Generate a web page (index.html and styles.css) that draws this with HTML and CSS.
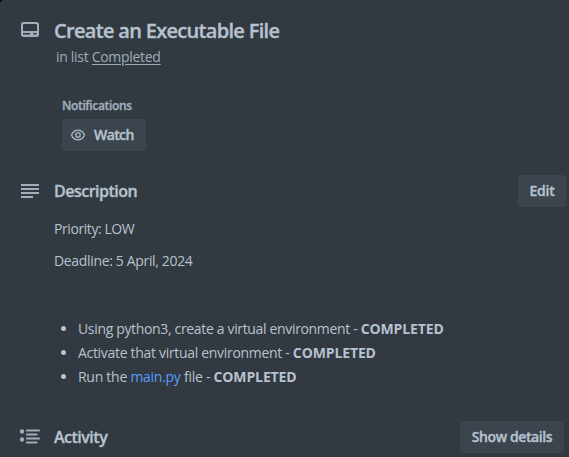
FILE: index.html
```html
<!DOCTYPE html>
<html lang="en">
<head>
<meta charset="utf-8">
<title>Create an Executable File</title>
<link rel="stylesheet" href="styles.css">
</head>
<body>
<main class="card">
  <header class="row header">
    <svg class="icon" viewBox="0 0 24 24"><path fill="currentColor" fill-rule="evenodd" d="M5.500 4h13A2.500 2.500 0 0 1 21 6.500V16.500a2.500 2.500 0 0 1-2.500 2.500h-13A2.500 2.500 0 0 1 3 16.500V6.500A2.500 2.500 0 0 1 5.500 4zM5 7v6h14V7a1 1 0 0 0-1-1H6a1 1 0 0 0-1 1zm0 8V16.400h7v-1.400zm10.500 0V16.400h3v-1.400z"/></svg>
    <div>
      <h1 class="title">Create an Executable File</h1>
      <p class="list-line">in list <a class="list-link">Completed</a></p>
    </div>
  </header>
  <section class="notifications">
    <h2 class="label">Notifications</h2>
    <button class="button watch"><svg class="eye" viewBox="0 0 16 16" fill="none" stroke="currentColor" stroke-width="1.5"><path d="M1.500 8C2.800 4.900 5.100 3.200 8 3.200S13.200 4.900 14.500 8C13.200 11.100 10.900 12.800 8 12.800S2.800 11.100 1.500 8z"/><circle cx="8" cy="8" r="2.200"/></svg><span>Watch</span></button>
  </section>
  <section class="row description-head">
    <svg class="icon" viewBox="0 0 24 24" fill="none" stroke="currentColor" stroke-width="2"><path d="M3 6h18M3 10h18M3 14h18M3 18h12"/></svg>
    <h2 class="heading">Description</h2>
    <button class="button edit">Edit</button>
  </section>
  <section class="content">
    <p class="priority">Priority: LOW</p>
    <p>Deadline: 5 April, 2024</p>
    <ul class="tasks">
      <li>Using python3, create a virtual environment - <strong>COMPLETED</strong></li>
      <li class="activate">Activate that virtual environment - <strong>COMPLETED</strong></li>
      <li class="run">Run the <a class="link">main.py</a> file - <strong>COMPLETED</strong></li>
    </ul>
  </section>
  <section class="row activity-head">
    <svg class="icon" viewBox="0 0 24 24" fill="none" stroke="currentColor" stroke-width="2.200" stroke-linecap="round"><path d="M9 5.500h12M9 9.500h9.500M9 13.500h12M9 17.500h9.500"/><g fill="currentColor" stroke="none"><circle cx="4" cy="6.500" r="2.200"/><circle cx="4" cy="14.500" r="2.200"/></g></svg>
    <h2 class="heading">Activity</h2>
    <button class="button details">Show details</button>
  </section>
</main>
</body>
</html>
```

FILE: styles.css
```css
* { box-sizing: border-box; }
body {
  margin: 0;
  background: #000;
  font: 14px/20px "Open Sans", "Noto Sans", sans-serif;
  color: #b6c2cf;
}
h1, h2, p, ul { margin: 0; padding: 0; }
.card {
  height: 457px;
  overflow: hidden;
  padding: 19px 3px 0 18px;
  background: #323940;
  border-top-left-radius: 4px;
}
.row { display: flex; align-items: center; }
.icon {
  flex: none;
  width: 24px;
  height: 24px;
  margin-right: 12px;
  color: #9fadbc;
}
.header { align-items: flex-start; height: 79px; }
.header .icon { margin-top: -1px; }
.title, .heading, .label, .button { -webkit-text-stroke: 0.35px currentColor; }
.title {
  font-size: 20px;
  line-height: 24px;
  font-weight: 600;
  letter-spacing: -0.69px;
  white-space: nowrap;
}
.list-line { margin: 4px 0 0 2px; color: #9fadbc; letter-spacing: -0.3px; }
.list-link { text-decoration: underline; text-underline-offset: 2px; }
.notifications { height: 77px; padding-left: 44px; }
.label {
  font-size: 12px;
  line-height: 16px;
  font-weight: 600;
  margin-bottom: 5px;
  color: #9fadbc;
  letter-spacing: -0.36px;
}
.button {
  display: flex;
  align-items: center;
  justify-content: center;
  height: 32px;
  padding: 0;
  border: 0;
  border-radius: 3px;
  background: #3c444d;
  color: #b6c2cf;
  font: 600 14px/20px "Open Sans", "Noto Sans", sans-serif;
  white-space: nowrap;
}
.watch { width: 84px; justify-content: flex-start; padding-left: 8px; letter-spacing: -0.6px; }
.eye { width: 16px; height: 16px; margin-right: 8px; color: #9fadbc; }
.heading { flex: 1; font-size: 16px; line-height: 20px; font-weight: 600; letter-spacing: -0.5px; }
.description-head { height: 32px; }
.edit { width: 48px; letter-spacing: -0.3px; }
.content { height: 214px; padding: 12px 0 0 36px; letter-spacing: -0.34px; white-space: nowrap; }
.content p { margin-bottom: 12px; }
.content .priority { letter-spacing: -0.42px; }
.tasks { padding: 34px 0 0 24px; line-height: 24px; }
.activate { letter-spacing: -0.31px; }
.run { letter-spacing: -0.27px; }
.tasks strong { font-weight: 700; letter-spacing: -0.12px; }
.link { color: #579dff; }
.activity-head { height: 32px; }
.details { width: 104px; margin-right: 2px; letter-spacing: -0.4px; }
```
